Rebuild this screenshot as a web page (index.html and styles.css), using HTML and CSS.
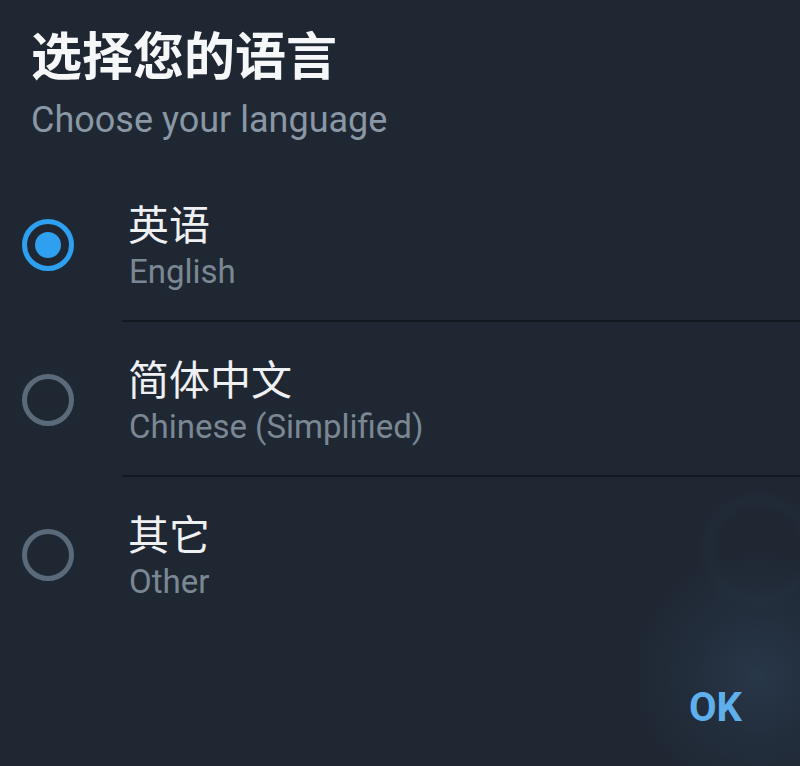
FILE: index.html
```html
<!DOCTYPE html>
<html>
<head>
    <meta charset="utf-8">
    <title>选择您的语言</title>
    <link rel="stylesheet" href="styles.css">
</head>
<body>
    <div class="dialog">
        <h1 class="title">选择您的语言</h1>
        <p class="subtitle">Choose your language</p>

        <div class="options">
            <div class="option selected">
                <div class="radio-cell"><span class="radio"></span></div>
                <div class="option-text">
                    <div class="primary">英语</div>
                    <div class="secondary">English</div>
                </div>
            </div>
            <div class="option">
                <div class="radio-cell"><span class="radio"></span></div>
                <div class="option-text">
                    <div class="primary">简体中文</div>
                    <div class="secondary">Chinese (Simplified)</div>
                </div>
            </div>
            <div class="option last">
                <div class="radio-cell"><span class="radio"></span></div>
                <div class="option-text">
                    <div class="primary">其它</div>
                    <div class="secondary">Other</div>
                </div>
            </div>
        </div>

        <div class="actions">
            <button class="ok-button">OK</button>
        </div>
    </div>
</body>
</html>
```

FILE: styles.css
```css
html, body {
    margin: 0;
    height: 100%;
}

body {
    background-color: #1f2733;
    background-image:
        radial-gradient(circle at 758px 675px, rgba(62, 96, 130, 0.28) 0, rgba(62, 96, 130, 0.13) 60px, rgba(62, 96, 130, 0) 125px),
        radial-gradient(circle at 758px 550px, rgba(60, 80, 105, 0) 0, rgba(60, 80, 105, 0) 40px, rgba(60, 80, 105, 0.06) 50px, rgba(60, 80, 105, 0) 62px);
    background-repeat: no-repeat;
    font-family: Roboto, "Noto Sans CJK SC", sans-serif;
    overflow: hidden;
}

.dialog {
    padding-top: 28px;
}

.title {
    margin: 0;
    padding-left: 31px;
    font-size: 51px;
    line-height: 60px;
    font-weight: 700;
    color: #f6f7f8;
}

.subtitle {
    margin: 12px 0 0;
    padding-left: 31px;
    font-size: 36px;
    line-height: 40px;
    color: #8a97a5;
}

.options {
    margin-top: 27px;
}

.option {
    display: flex;
    height: 155px;
}

.radio-cell {
    width: 122px;
    flex-shrink: 0;
    padding: 52px 0 0 22px;
    box-sizing: border-box;
}

.radio {
    display: block;
    width: 52px;
    height: 52px;
    border: 5px solid #5b6a7a;
    border-radius: 50%;
    box-sizing: border-box;
}

.selected .radio {
    border-color: #2f9ff0;
    position: relative;
}

.selected .radio::after {
    content: "";
    position: absolute;
    left: 8px;
    top: 8px;
    width: 26px;
    height: 26px;
    border-radius: 50%;
    background-color: #2f9ff0;
}

.option-text {
    flex: 1;
    padding-top: 33px;
    border-bottom: 2px solid #131921;
    box-sizing: border-box;
}

.last .option-text {
    border-bottom: none;
}

.primary {
    font-size: 41px;
    line-height: 52px;
    color: #eef0f2;
    padding-left: 6px;
}

.secondary {
    font-size: 33px;
    line-height: 40px;
    color: #7b8793;
    padding-left: 7px;
}

.actions {
    display: flex;
    justify-content: flex-end;
    margin-top: 52px;
    padding-right: 58px;
}

.ok-button {
    background: none;
    border: none;
    padding: 0;
    font-family: Roboto, sans-serif;
    font-size: 40px;
    line-height: 48px;
    font-weight: 700;
    color: #5eb0ec;
    cursor: pointer;
}
```
